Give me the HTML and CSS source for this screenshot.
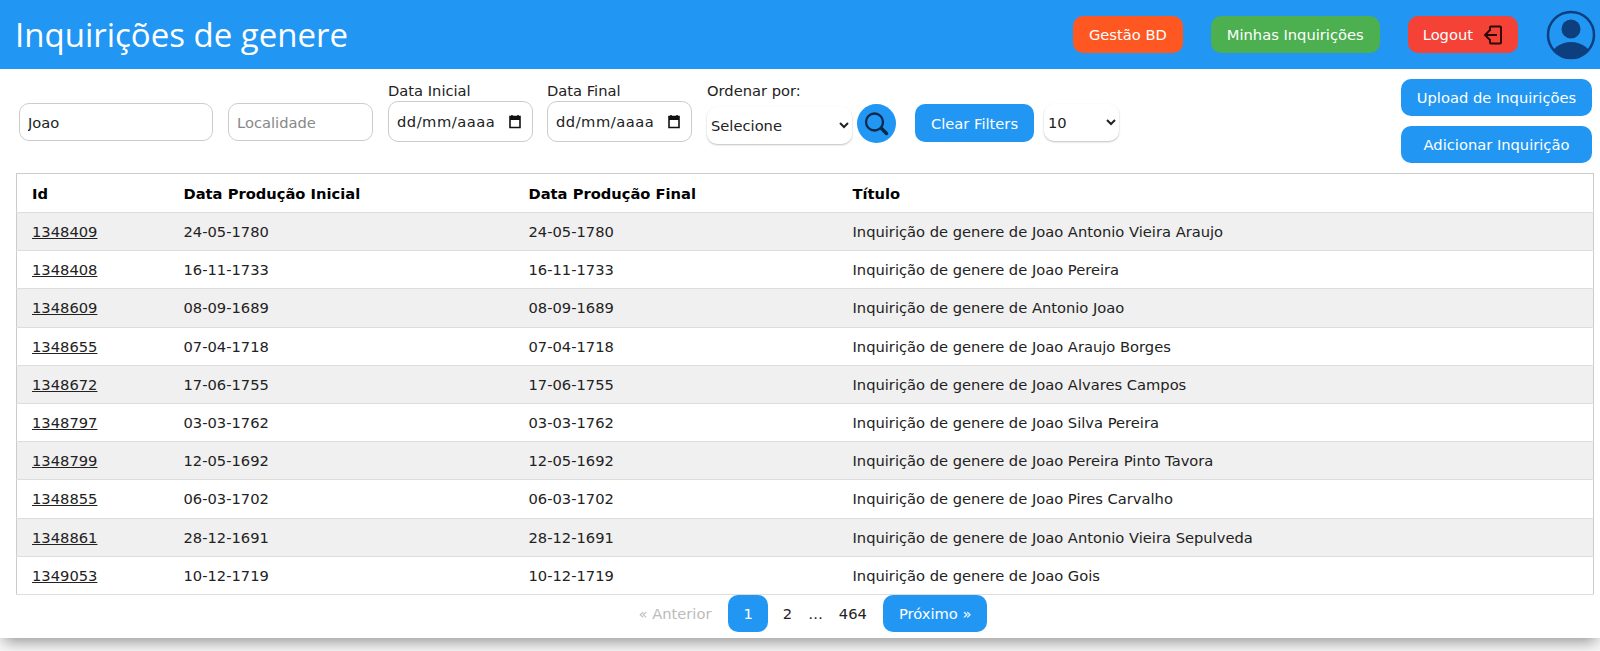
FILE: index.html
```html
<!DOCTYPE html>
<html lang="pt">
<head>
  <title>Inquirições de genere</title>
  <link rel="stylesheet" href="styles.css">
</head>
<body>
  <div class="container">
    <header class="topbar">
      <h1>Inquirições de genere</h1>
      <nav class="topnav">
        <a class="navbtn orange" href="#">Gestão BD</a>
        <a class="navbtn green" href="#">Minhas Inquirições</a>
        <a class="navbtn red" href="#">Logout
          <svg class="logout-icon" width="20" height="20" viewBox="0 0 20 20" fill="none" stroke="#2a0808" stroke-width="1.9">
            <path d="M7 6V2.5a1 1 0 0 1 1-1h9a1 1 0 0 1 1 1v15a1 1 0 0 1-1 1H8a1 1 0 0 1-1-1V14"/>
            <path d="M14 10H2M6.5 5.5L2 10l4.5 4.5"/>
          </svg>
        </a>
        <svg class="avatar" width="50" height="50" viewBox="0 0 50 50">
          <defs><clipPath id="circ"><circle cx="25" cy="25" r="22.5"/></clipPath></defs>
          <circle cx="25" cy="19" r="9.5" fill="#0d3f7f"/>
          <ellipse cx="25" cy="47" rx="20" ry="15" fill="#0d3f7f" clip-path="url(#circ)"/>
          <circle cx="25" cy="25" r="23" fill="none" stroke="#0d3f7f" stroke-width="2.5"/>
        </svg>
      </nav>
    </header>

    <form class="filters" onsubmit="return false">
      <input class="field name" type="text" value="Joao">
      <input class="field local" type="text" placeholder="Localidade">
      <label class="group">Data Inicial
        <span class="field date">dd/mm/aaaa
          <svg width="14" height="14" viewBox="0 0 14 14"><path d="M2 1.5h10v11H2z" fill="none" stroke="#111" stroke-width="1.6"/><path d="M2 1.5h10v3.5H2z" fill="#111"/><path d="M4 0v2M10 0v2" stroke="#111" stroke-width="1.5"/></svg>
        </span>
      </label>
      <label class="group">Data Final
        <span class="field date">dd/mm/aaaa
          <svg width="14" height="14" viewBox="0 0 14 14"><path d="M2 1.5h10v11H2z" fill="none" stroke="#111" stroke-width="1.6"/><path d="M2 1.5h10v3.5H2z" fill="#111"/><path d="M4 0v2M10 0v2" stroke="#111" stroke-width="1.5"/></svg>
        </span>
      </label>
      <label class="group order">Ordenar por:
        <select class="pick sort"><option>Selecione</option></select>
      </label>
      <button class="search" type="button">
        <svg width="28" height="28" viewBox="0 0 28 28" fill="none" stroke="#0b2a4a">
          <circle cx="11.5" cy="12" r="8.5" stroke-width="2.3"/>
          <path d="M18.5 18.5l5 5" stroke-width="3.5" stroke-linecap="round"/>
        </svg>
      </button>
      <button class="btn clear" type="button">Clear Filters</button>
      <select class="pick perpage"><option>10</option></select>
      <div class="actions">
        <button class="btn" type="button">Upload de Inquirições</button>
        <button class="btn" type="button">Adicionar Inquirição</button>
      </div>
    </form>

    <table>
      <thead>
        <tr><th class="c1">Id</th><th class="c2">Data Produção Inicial</th><th class="c3">Data Produção Final</th><th>Título</th></tr>
      </thead>
      <tbody>
        <tr><td><a href="#">1348409</a></td><td>24-05-1780</td><td>24-05-1780</td><td>Inquirição de genere de Joao Antonio Vieira Araujo</td></tr>
        <tr><td><a href="#">1348408</a></td><td>16-11-1733</td><td>16-11-1733</td><td>Inquirição de genere de Joao Pereira</td></tr>
        <tr><td><a href="#">1348609</a></td><td>08-09-1689</td><td>08-09-1689</td><td>Inquirição de genere de Antonio Joao</td></tr>
        <tr><td><a href="#">1348655</a></td><td>07-04-1718</td><td>07-04-1718</td><td>Inquirição de genere de Joao Araujo Borges</td></tr>
        <tr><td><a href="#">1348672</a></td><td>17-06-1755</td><td>17-06-1755</td><td>Inquirição de genere de Joao Alvares Campos</td></tr>
        <tr><td><a href="#">1348797</a></td><td>03-03-1762</td><td>03-03-1762</td><td>Inquirição de genere de Joao Silva Pereira</td></tr>
        <tr><td><a href="#">1348799</a></td><td>12-05-1692</td><td>12-05-1692</td><td>Inquirição de genere de Joao Pereira Pinto Tavora</td></tr>
        <tr><td><a href="#">1348855</a></td><td>06-03-1702</td><td>06-03-1702</td><td>Inquirição de genere de Joao Pires Carvalho</td></tr>
        <tr><td><a href="#">1348861</a></td><td>28-12-1691</td><td>28-12-1691</td><td>Inquirição de genere de Joao Antonio Vieira Sepulveda</td></tr>
        <tr><td><a href="#">1349053</a></td><td>10-12-1719</td><td>10-12-1719</td><td>Inquirição de genere de Joao Gois</td></tr>
      </tbody>
    </table>

    <div class="pagination">
      <span class="off">« Anterior</span>
      <a class="page current" href="#">1</a>
      <a class="page num" href="#">2</a>
      <span class="dots">…</span>
      <a class="page num" href="#">464</a>
      <a class="page next" href="#">Próximo »</a>
    </div>
  </div>
</body>
</html>
```

FILE: styles.css
```css
html, body {
  height: 100%;
}

body {
  margin: 0;
  overflow: hidden;
  background-color: #f8f8f8;
  font-family: "DejaVu Sans", Verdana, sans-serif;
  font-size: 14.7px;
  color: #222;
}

.container {
  height: 638px;
  background-color: #fff;
  box-shadow: 0 8px 14px -4px rgba(0, 0, 0, 0.4);
}

.topbar {
  height: 69px;
  padding: 0 4px 0 15px;
  background-color: #2196f3;
  display: flex;
  align-items: center;
  justify-content: space-between;
}

.topbar h1 {
  margin: 0;
  font-family: "Open Sans", sans-serif;
  font-size: 33px;
  font-weight: 400;
  color: #fff;
}

.topnav {
  display: flex;
  align-items: center;
}

.navbtn {
  height: 37px;
  margin-right: 28px;
  padding: 0 16px;
  display: flex;
  align-items: center;
  border-radius: 10px;
  color: #fff;
  text-decoration: none;
}

.orange { background-color: #ff5722; }
.green { background-color: #4caf50; }
.red {
  padding: 0 15px;
  background-color: #f44336;
}

.logout-icon {
  margin-left: 10px;
}

.avatar {
  display: block;
}

.filters {
  height: 104px;
  padding: 0 8px 0 19px;
  display: flex;
  align-items: flex-start;
}

.field {
  box-sizing: border-box;
  height: 38px;
  margin-top: 34px;
  padding: 0 8px;
  border: 1px solid #ccc;
  border-radius: 10px;
  background: #fff;
  font: inherit;
  color: #222;
  outline: none;
}

.field::placeholder {
  color: #888;
}

.name {
  width: 194px;
  margin-right: 15px;
}

.local {
  width: 145px;
  margin-right: 15px;
}

.group {
  display: block;
  margin-top: 13px;
  margin-right: 14px;
  line-height: 18px;
}

.date {
  width: 145px;
  height: 41px;
  margin-top: 1px;
  padding-right: 10px;
  display: flex;
  align-items: center;
  justify-content: space-between;
  letter-spacing: 0.5px;
}

.order {
  margin-left: 1px;
  margin-right: 5px;
}

.pick {
  display: block;
  border: none;
  border-radius: 10px;
  background: #fff;
  box-shadow: 0 1px 2px rgba(0, 0, 0, 0.25);
  font: inherit;
  color: #222;
  outline: none;
}

.sort {
  width: 145px;
  height: 37px;
  margin-top: 7px;
}

.search {
  width: 39px;
  height: 39px;
  margin-top: 35px;
  margin-right: 19px;
  padding: 0;
  border: none;
  border-radius: 50%;
  background-color: #2196f3;
  display: flex;
  align-items: center;
  justify-content: center;
}

.btn {
  border: none;
  border-radius: 10px;
  background-color: #2196f3;
  color: #fff;
  font: inherit;
}

.clear {
  width: 119px;
  height: 38px;
  margin-top: 35px;
  margin-right: 10px;
}

.perpage {
  width: 75px;
  height: 37px;
  margin-top: 35px;
}

.actions {
  width: 191px;
  margin-top: 10px;
  margin-left: auto;
  display: flex;
  flex-direction: column;
  gap: 10px;
}

.actions .btn {
  height: 37px;
}

table {
  width: 1578px;
  margin-left: 16px;
  border-collapse: collapse;
  border: 1px solid #ccc;
}

th, td {
  padding: 0 15px;
  box-sizing: border-box;
  text-align: left;
  border-bottom: 1px solid #ddd;
}

th {
  height: 39px;
  color: #000;
}

td {
  height: 38.2px;
}

tbody tr:nth-child(odd) {
  background-color: #f0f0f0;
}

.c1 { width: 152px; }
.c2 { width: 345px; }
.c3 { width: 324px; }

td a {
  color: #222;
}

.pagination {
  height: 38px;
  display: flex;
  align-items: center;
  justify-content: center;
  padding-left: 26px;
}

.off {
  color: #bbb;
  margin-right: 17px;
}

.page {
  color: #222;
  text-decoration: none;
}

.num {
  padding: 0 14px;
}

.dots {
  margin: 0 2px;
}

.current, .next {
  height: 37px;
  display: flex;
  align-items: center;
  border-radius: 10px;
  background-color: #2196f3;
  color: #fff;
}

.current {
  padding: 0 15px;
  margin-right: 1px;
}

.next {
  padding: 0 16px;
  margin-left: 2px;
}
```
